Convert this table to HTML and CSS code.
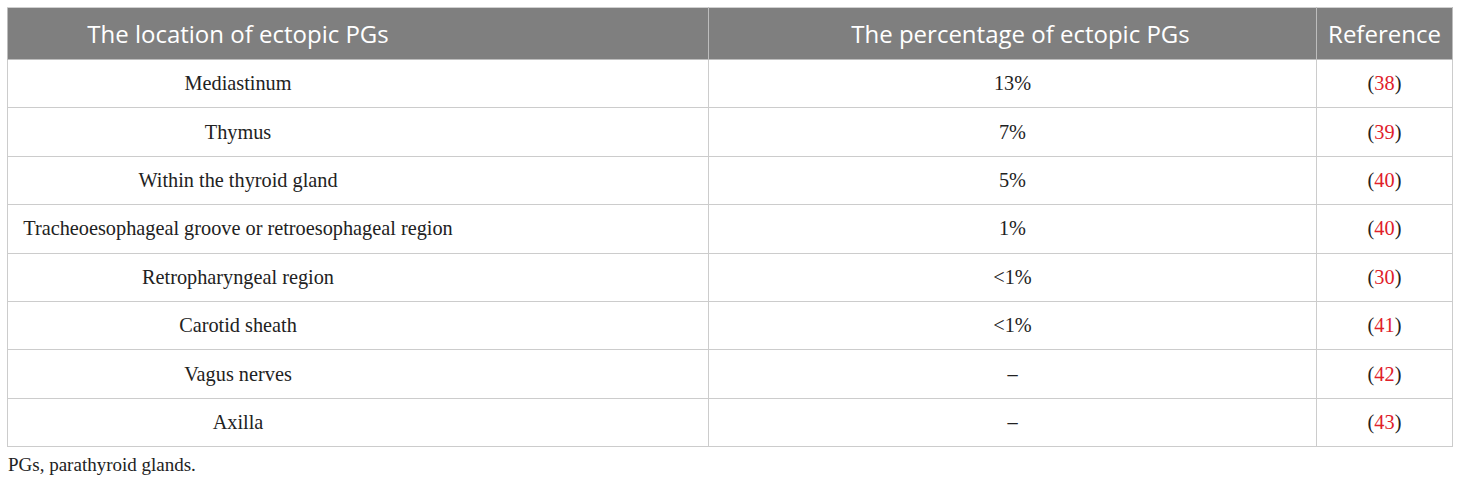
FILE: index.html
```html
<!DOCTYPE html>
<html>
<head>
<meta charset="utf-8">
<link rel="stylesheet" href="styles.css">
</head>
<body>
<div class="wrap">
<table class="tbl">
<colgroup><col class="c1"><col class="c2"><col class="c3"></colgroup>
<thead>
<tr><th class="first">The location of ectopic PGs</th><th class="second">The percentage of ectopic PGs</th><th>Reference</th></tr>
</thead>
<tbody>
<tr><td class="first">Mediastinum</td><td>13%</td><td>(<span class="ref">38</span>)</td></tr>
<tr><td class="first">Thymus</td><td>7%</td><td>(<span class="ref">39</span>)</td></tr>
<tr><td class="first">Within the thyroid gland</td><td>5%</td><td>(<span class="ref">40</span>)</td></tr>
<tr><td class="first">Tracheoesophageal groove or retroesophageal region</td><td>1%</td><td>(<span class="ref">40</span>)</td></tr>
<tr><td class="first">Retropharyngeal region</td><td>&lt;1%</td><td>(<span class="ref">30</span>)</td></tr>
<tr><td class="first">Carotid sheath</td><td>&lt;1%</td><td>(<span class="ref">41</span>)</td></tr>
<tr><td class="first">Vagus nerves</td><td>–</td><td>(<span class="ref">42</span>)</td></tr>
<tr><td class="first">Axilla</td><td>–</td><td>(<span class="ref">43</span>)</td></tr>
</tbody>
</table>
<p class="note">PGs, parathyroid glands.</p>
</div>
</body>
</html>
```

FILE: styles.css
```css
html, body { margin: 0; padding: 0; background: #fff; }
.wrap { padding: 7px 8px 0 7px; }
.tbl {
  border-collapse: collapse;
  width: 1445px;
  table-layout: fixed;
}
.c1 { width: 701px; }
.c2 { width: 608px; }
.c3 { width: 136px; }
.tbl th {
  background: #7f7f7f;
  color: #fff;
  font-family: "Open Sans", "Noto Sans", sans-serif;
  font-weight: 400;
  font-size: 24px;
  line-height: 28px;
  height: 51px;
  padding: 0;
  text-align: center;
  border: 1px solid #bdbdbd;
  border-top-color: #d0d0d0;
}
.tbl th.second {
  padding-left: 16px;
}
.tbl td {
  font-family: "Liberation Serif", serif;
  font-size: 20.3px;
  line-height: 23px;
  color: #222;
  text-align: center;
  height: 47.4px;
  padding: 0;
  border: 1px solid #cccccc;
}
.tbl th.first,
.tbl td.first {
  padding-left: 10px;
  padding-right: 250px;
}
.ref { color: #e0202a; }
.note {
  margin: 7px 0 0 1px;
  font-family: "Liberation Serif", serif;
  font-size: 19px;
  color: #222;
}
```
